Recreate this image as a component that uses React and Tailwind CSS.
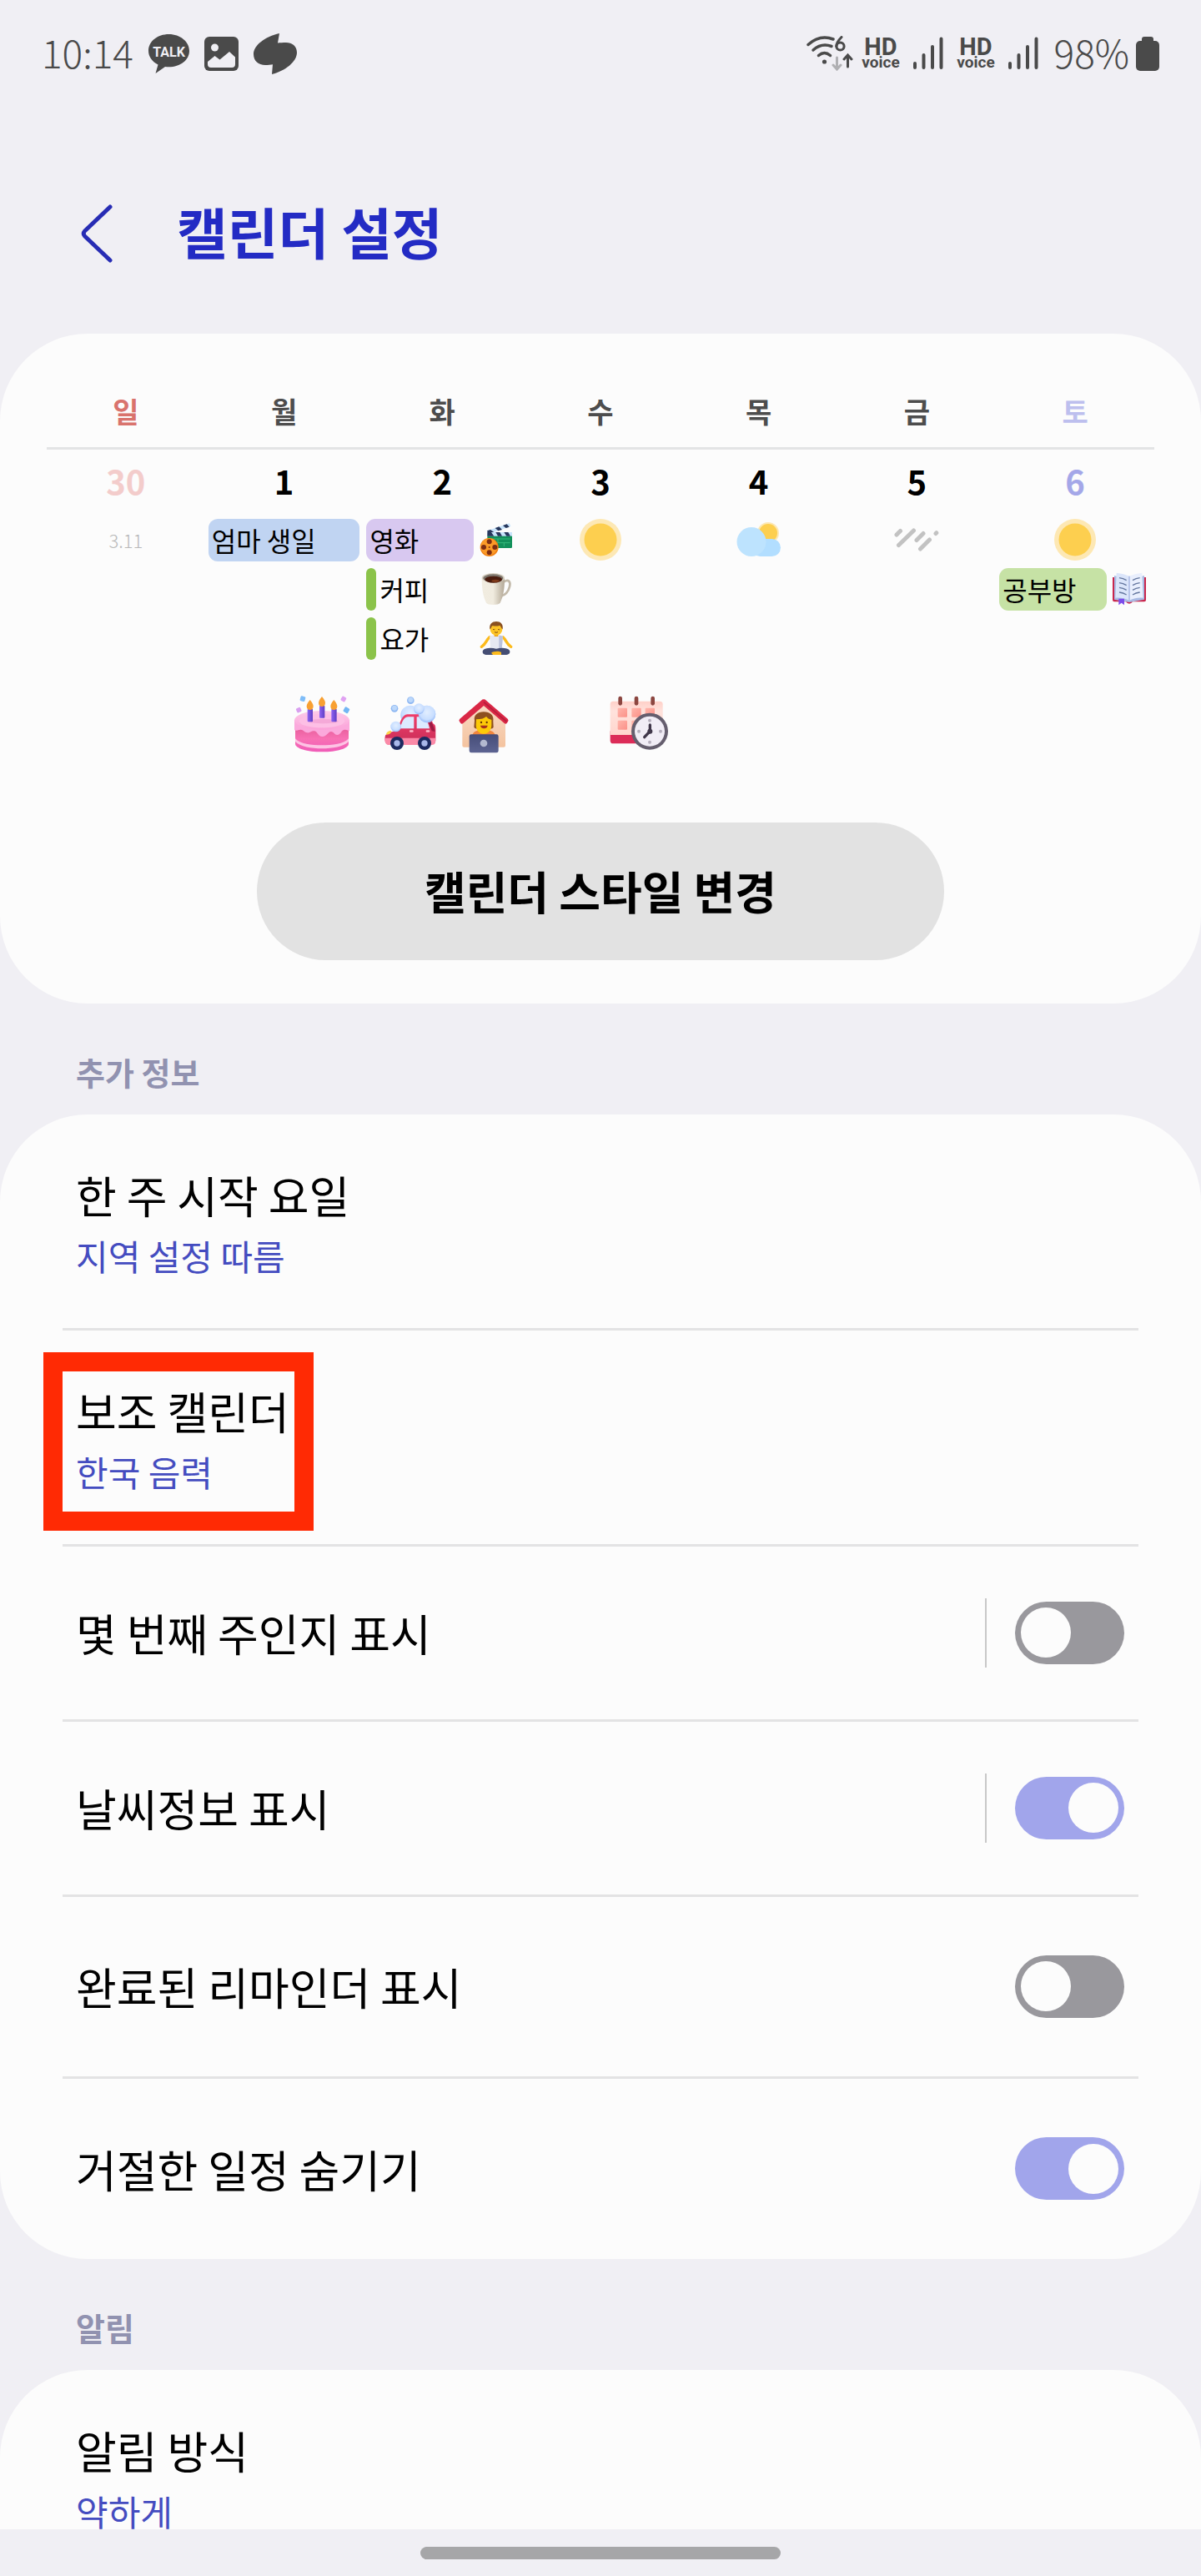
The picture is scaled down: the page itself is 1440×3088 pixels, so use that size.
import React, { useState } from "react";

const weekdays = [
  { name: "일", color: "text-[#d9736d]" },
  { name: "월", color: "text-[#4d4d4d]" },
  { name: "화", color: "text-[#4d4d4d]" },
  { name: "수", color: "text-[#4d4d4d]" },
  { name: "목", color: "text-[#4d4d4d]" },
  { name: "금", color: "text-[#4d4d4d]" },
  { name: "토", color: "text-[#bdbfee]" },
];

/* ---------- status bar icons ---------- */

const TalkIcon = () => (
  <svg className="w-[49px] h-[47px]" viewBox="0 0 49 47">
    <path
      d="M24.500 0C11 0 0 8.500 0 20c0 7 4.500 13 11.500 16.500L8.500 47l11.500-8c1.500.2 3 .3 4.500.3C38 39.300 49 31 49 20S38 0 24.500 0Z"
      fill="#4a4a4a"
    />
    <text x="24.500" y="26.500" textAnchor="middle" fontSize="16" fontWeight="700" fontFamily="Roboto, sans-serif" fill="#f0eff4">
      TALK
    </text>
  </svg>
);

const GalleryIcon = () => (
  <svg className="w-[41px] h-[41px]" viewBox="0 0 41 41">
    <rect width="41" height="41" rx="6" fill="#4a4a4a" />
    <circle cx="12.500" cy="13" r="4.500" fill="#f0eff4" />
    <path d="M4 30l8.500-7 6 4.500L30 18l7 6.500V33a4 4 0 0 1-4 4H8a4 4 0 0 1-4-4Z" fill="#f0eff4" />
  </svg>
);

const LeafIcon = () => (
  <svg className="w-[52px] h-[49px]" viewBox="0 0 52 49">
    <path
      d="M31 0C14 4 0 14 0 25c0 8 6 13 14 13 3.500 0 6.500-.4 9-.8L22 49c16-4 30-15 30-26 0-8-6-12-13-12-4 0-7 .2-10 .6Z"
      fill="#4a4a4a"
    />
  </svg>
);

const WifiIcon = () => (
  <svg className="w-[57px] h-[42px]" viewBox="0 0 57 42" fill="none" stroke="#4a4a4a" strokeLinecap="round">
    <path d="M2 10.500Q16 -2 32 4" strokeWidth="3.500" />
    <path d="M8 17Q18 8 30 12.500" strokeWidth="3.500" />
    <path d="M14.500 23.500Q21.500 17.500 28.500 23.500" strokeWidth="3.500" />
    <circle cx="21.500" cy="31" r="2.600" fill="#4a4a4a" stroke="none" />
    <path d="M42 1.500C37.500 6 35.800 9 35.800 12.500" strokeWidth="3" />
    <circle cx="40.500" cy="12.500" r="4.600" strokeWidth="3" />
    <path d="M36.500 26v13M32 35l4.500 5 4.500-5" stroke="#b0b0b3" strokeWidth="3" />
    <path d="M49.500 37V24M45 28l4.500-5 4.500 5" strokeWidth="3" />
  </svg>
);

const HdVoiceIcon = () => (
  <svg className="w-12 h-[52px]" viewBox="0 -8 48 52" fill="#4a4a4a" fontFamily="Roboto, sans-serif" fontWeight="700">
    <text x="24" y="20" fontSize="29" textAnchor="middle">
      HD
    </text>
    <text x="24" y="35" fontSize="19" textAnchor="middle">
      voice
    </text>
  </svg>
);

const SignalIcon = () => (
  <svg className="w-9 h-10" viewBox="0 0 36 40" stroke="#4a4a4a" strokeWidth="4" strokeLinecap="round">
    <path d="M2 32v5M12.500 22v15M23 12v25M33.500 2.500v34.500" />
  </svg>
);

const BatteryIcon = () => (
  <svg className="w-7 h-[41px]" viewBox="0 0 28 41" fill="#4a4a4a">
    <rect x="7" width="14" height="10" rx="3" />
    <rect y="5" width="28" height="36" rx="5" />
  </svg>
);

/* ---------- weather icons ---------- */

const SunIcon = () => (
  <svg className="size-[50px]" viewBox="0 0 50 50">
    <circle cx="25" cy="25" r="25" fill="#fde8b4" />
    <circle cx="25" cy="25" r="19.500" fill="#fdcf4f" />
  </svg>
);

const CloudIcon = () => (
  <svg className="w-[54px] h-[42px]" viewBox="0 0 54 42">
    <circle cx="38" cy="13" r="13" fill="#fde8b4" />
    <circle cx="38" cy="13" r="11" fill="#fdcf4f" />
    <rect x="18" y="20" width="35" height="21" rx="10.500" fill="#b2deff" />
    <circle cx="18" cy="23.500" r="17.500" fill="#bde3fe" />
  </svg>
);

const RainIcon = () => (
  <svg className="w-[54px] h-7" viewBox="0 0 54 28" stroke="#c2c2c2" strokeWidth="5" strokeLinecap="round">
    <path d="M3 8l4.500-4.500M5.500 20.500L23.500 3M27 14.500l8-8M31.500 25l11-11M50 6.500l.8-.8" />
  </svg>
);

/* ---------- small event stickers ---------- */

const MovieSticker = () => (
  <svg className="size-10" viewBox="0 0 120 120">
    <rect x="28" y="40" width="89" height="50" rx="4" fill="#12905a" />
    <path d="M38 57h72M38 71h72M66 57v14M88 71v13" stroke="#35b87c" strokeWidth="3" />
    <path d="M27 28l80-27 5 11-80 27Z" fill="#c9e4fb" />
    <path d="M27 28l12-4 13 9-20 7ZM56 18l14-5 11 11-14 4ZM84 9l14-5 9 10-12 4Z" fill="#27375c" />
    <rect x="28" y="33" width="89" height="14" fill="#c9e4fb" />
    <path d="M28 33h14l10 14H28ZM58 33h15l8 14H66ZM88 33h15l8 14H97Z" fill="#27375c" />
    <circle cx="35" cy="87" r="33" fill="#f07f12" />
    <circle cx="34" cy="85" r="30" fill="#fb9a27" />
    <circle cx="35" cy="67" r="9" fill="#7d2d12" />
    <circle cx="35" cy="106" r="9" fill="#7d2d12" />
    <circle cx="15" cy="87" r="9" fill="#7d2d12" />
    <circle cx="55" cy="87" r="9" fill="#7d2d12" />
    <circle cx="35" cy="87" r="3" fill="#7d2d12" />
  </svg>
);

const CoffeeSticker = () => (
  <svg className="size-10" viewBox="0 0 120 120">
    <defs>
      <linearGradient id="mug" x1="0" x2="1">
        <stop offset="0" stopColor="#f1ece0" />
        <stop offset="0.500" stopColor="#f0ebdf" />
        <stop offset="1" stopColor="#b3a896" />
      </linearGradient>
    </defs>
    <path d="M88 34c16-10 25 0 20 18-4 15-14 29-30 33" fill="none" stroke="#c2b9a9" strokeWidth="8" />
    <path d="M8 22c0 40 5 65 16 88 6 9 44 9 50 0 11-23 16-48 16-88Z" fill="url(#mug)" />
    <ellipse cx="49" cy="20" rx="41" ry="17" fill="#d9d2c4" />
    <ellipse cx="49" cy="21" rx="36" ry="14" fill="#7d766d" />
    <ellipse cx="50" cy="26" rx="31" ry="12" fill="#4a1c0e" />
    <ellipse cx="57" cy="31" rx="14" ry="5" fill="#7e3919" />
  </svg>
);

const YogaSticker = () => (
  <svg className="size-10" viewBox="0 0 120 120">
    <path d="M36 56C24 66 24 80 7 91M84 56c12 10 12 24 29 35" fill="none" stroke="#fdbb1c" strokeWidth="10" strokeLinecap="round" />
    <path d="M36 53c12-6 36-6 48 0l-4 46H40Z" fill="#e6e9f2" />
    <path d="M70 50c6 0 10 1 14 4l-4 45H70Z" fill="#bcc3dc" />
    <path d="M12 104c8-10 30-10 48-6 18-4 40-4 48 6 4 10-4 16-16 16H28c-12 0-20-6-16-16Z" fill="#454e74" />
    <path d="M42 113c8-7 28-8 36-2v9H48Z" fill="#fdbb1c" />
    <rect x="53" y="38" width="14" height="16" fill="#f0a30c" />
    <circle cx="60" cy="28" r="22" fill="#fdc426" />
    <path d="M37 28C34 8 46 0 60 0c16 0 26 10 23 28-5-2-6-10-10-14-10 4-24 2-28 2-3 4-3 10-8 12Z" fill="#8a5020" />
    <path d="M48 28q4 3 7 0M66 28q4 3 7 0M54 38q6 4 12 0" fill="none" stroke="#6b3a10" strokeWidth="2.500" />
  </svg>
);

const BookSticker = () => (
  <svg className="size-10" viewBox="0 0 120 120">
    <path d="M0 18h120v82q0 6-6 6H72q-4 7-12 7t-12-7H6q-6 0-6-6Z" fill="#c9264d" />
    <path d="M6 12l54 14 54-14v86l-54 10-54-10Z" fill="#a9bbe4" />
    <path d="M14 2c18 2 34 6 46 12v88C46 94 30 90 10 92Z" fill="#dbe5fa" />
    <path d="M106 2C88 4 72 8 60 14v88c14-8 30-12 50-10Z" fill="#e9effd" />
    <path d="M60 14v88" stroke="#b0bfe6" strokeWidth="5" />
    <path
      d="M24 20q14 2 26 9M24 38q14 2 26 9M24 55q14 2 26 9M24 72q14 2 26 9M98 20q-14 2-26 9M98 38q-14 2-26 9M98 55q-14 2-26 9M98 72q-14 2-26 9"
      fill="none"
      stroke="#64779f"
      strokeWidth="4"
    />
    <path d="M22 95h20v23l-10-8-10 8Z" fill="#7c4bea" />
  </svg>
);

/* ---------- large stickers ---------- */

const CakeSticker = () => (
  <svg className="size-[70px]" viewBox="0 0 210 210">
    <defs>
      <linearGradient id="cakeBody" x1="0" y1="0" x2="0" y2="1">
        <stop offset="0" stopColor="#e0568f" />
        <stop offset="0.550" stopColor="#f871b4" />
        <stop offset="1" stopColor="#f05bb8" />
      </linearGradient>
      <linearGradient id="cakeTop" x1="0" y1="0" x2="0" y2="1">
        <stop offset="0" stopColor="#fdcbe9" />
        <stop offset="1" stopColor="#fba3d9" />
      </linearGradient>
      <linearGradient id="candle" x1="0" x2="1">
        <stop offset="0" stopColor="#8f63f2" />
        <stop offset="1" stopColor="#5f3fc4" />
      </linearGradient>
    </defs>
    <path d="M9 100h192v76c0 16-42 29-96 29S9 192 9 176Z" fill="url(#cakeBody)" />
    <path d="M9 157c16 20 60 24 96 24s80-4 96-24v11c-16 18-60 25-96 25s-80-7-96-25Z" fill="#fdc3e4" />
    <path
      d="M6 92h198v38c-8-2-12-6-20-4-10 3-12 18-24 18-10 0-12-12-22-12-12 0-14 18-32 18-16 0-16-18-28-20-10-2-16 8-26 6-12-2-14-12-24-11-10 1-12 5-22 2Z"
      fill="#fba9dc"
    />
    <ellipse cx="105" cy="91" rx="99" ry="34" fill="url(#cakeTop)" />
    <ellipse cx="105" cy="94" rx="82" ry="24" fill="#fdbfe5" />
    <ellipse cx="110" cy="95" rx="54" ry="8" fill="#ee93cc" opacity="0.500" />
    <rect x="53" y="50" width="19" height="47" rx="3" fill="url(#candle)" />
    <rect x="96" y="38" width="19" height="45" rx="3" fill="url(#candle)" />
    <rect x="139" y="50" width="19" height="47" rx="3" fill="url(#candle)" />
    <path d="M62 18c8 10 12 17 12 23 0 8-5 13-12 13s-12-5-12-13c0-6 4-13 12-23Z" fill="#f8a032" />
    <path d="M105 6c8 10 12 17 12 23 0 8-5 13-12 13s-12-5-12-13c0-6 4-13 12-23Z" fill="#f8a032" />
    <path d="M148 18c8 10 12 17 12 23 0 8-5 13-12 13s-12-5-12-13c0-6 4-13 12-23Z" fill="#f8a032" />
    <rect x="27" y="5" width="18" height="18" rx="4" fill="#7fbdf8" transform="rotate(15 36 14)" />
    <rect x="13" y="46" width="17" height="17" rx="4" fill="#d9a0f0" transform="rotate(-25 21 54)" />
    <rect x="174" y="6" width="17" height="17" rx="4" fill="#e0a2f2" transform="rotate(30 182 15)" />
    <rect x="184" y="45" width="19" height="19" rx="4" fill="#72b6f4" transform="rotate(30 193 54)" />
  </svg>
);

const CarWashSticker = () => (
  <svg className="size-[70px]" viewBox="0 0 210 210">
    <defs>
      <radialGradient id="bubble" cx="0.500" cy="0.400" r="0.600">
        <stop offset="0" stopColor="#e2eeff" />
        <stop offset="0.700" stopColor="#c8deff" />
        <stop offset="1" stopColor="#94b8f8" />
      </radialGradient>
      <linearGradient id="carBody" x1="0" y1="0" x2="0" y2="1">
        <stop offset="0" stopColor="#f03d6a" />
        <stop offset="1" stopColor="#c92e58" />
      </linearGradient>
    </defs>
    <circle cx="105" cy="73" r="35" fill="url(#bubble)" />
    <circle cx="165" cy="69" r="31" fill="url(#bubble)" />
    <path
      d="M14 150c2-16 30-18 44-22 10-32 18-56 36-58h68c10 0 18 14 24 32 8 4 10 10 10 20v40c0 10-4 16-14 16H26c-10 0-14-14-12-28Z"
      fill="url(#carBody)"
    />
    <path d="M168 92l14 6c4 10 10 22 12 34l-12-2Z" fill="#9d1c44" />
    <path d="M68 121c6-24 14-42 30-42h20v42Z" fill="#dceaff" />
    <path d="M128 79h28c6 0 14 26 18 42h-46Z" fill="#dceaff" />
    <circle cx="165" cy="69" r="31" fill="url(#bubble)" />
    <path d="M13 155h182v15c0 6-6 10-14 10H28c-12 0-16-12-15-25Z" fill="#fb8aa8" />
    <path d="M18 143c0-8 8-14 18-14 2 8-6 15-18 14Z" fill="#fcd34a" />
    <rect x="102" y="127" width="14" height="7" rx="3" fill="#fdb9c9" />
    <rect x="161" y="127" width="14" height="7" rx="3" fill="#fdb9c9" />
    <circle cx="57" cy="174" r="24" fill="#1d2a60" />
    <circle cx="57" cy="174" r="11" fill="#a9b8ea" />
    <circle cx="156" cy="174" r="24" fill="#1d2a60" />
    <circle cx="156" cy="174" r="11" fill="#a9b8ea" />
    <circle cx="53" cy="114" r="19" fill="url(#bubble)" />
    <circle cx="136" cy="50" r="19" fill="url(#bubble)" />
    <circle cx="48" cy="49" r="13" fill="#8fb8f2" />
    <circle cx="48" cy="47" r="9" fill="#bcd8fb" />
    <circle cx="106" cy="20" r="13" fill="#8fb8f2" />
    <circle cx="106" cy="18" r="9" fill="#bcd8fb" />
  </svg>
);

const HomeSticker = () => (
  <svg className="size-[70px]" viewBox="0 0 210 210">
    <defs>
      <linearGradient id="wall" x1="0" y1="0" x2="0" y2="1">
        <stop offset="0" stopColor="#f9dcc6" />
        <stop offset="1" stopColor="#f4c39f" />
      </linearGradient>
      <linearGradient id="laptop" x1="0" y1="0" x2="0" y2="1">
        <stop offset="0" stopColor="#464d78" />
        <stop offset="1" stopColor="#5d6492" />
      </linearGradient>
    </defs>
    <path d="M28 92l77-66 78 66v90q0 6-6 6H34q-6 0-6-6Z" fill="url(#wall)" />
    <path d="M105 16q5 0 9 4l77 66q5 5 1 10l-4 6q-4 4-9 0l-74-63-74 63q-5 4-9 0l-4-6q-4-5 1-10l77-66q4-4 9-4Z" fill="#da2846" />
    <path d="M105 26l82 70" stroke="#b81d3c" strokeWidth="5" />
    <path d="M64 144c4-14 20-18 41-18s37 4 41 18Z" fill="#f0853d" />
    <path d="M72 92c-4-18 10-31 33-31 22 0 38 12 34 34l1 22q-6 6-12 4H82q-8 2-12-5Z" fill="#8d5020" />
    <path d="M78 88c18 0 30-4 36-10 8 10 16 10 19 12v18c0 20-12 32-28 32s-28-12-28-32Z" fill="#fdca08" />
    <circle cx="96" cy="99" r="3.500" fill="#653006" />
    <circle cx="116" cy="99" r="3.500" fill="#653006" />
    <path d="M93 110h26c-1 14-25 14-26 0Z" fill="#a8331c" />
    <rect x="53" y="142" width="105" height="66" rx="7" fill="url(#laptop)" />
    <circle cx="105" cy="174" r="13" fill="#b3b9d0" />
  </svg>
);

const ScheduleSticker = () => (
  <svg className="size-[70px]" viewBox="0 0 210 210">
    <defs>
      <linearGradient id="sheet" x1="0" y1="0" x2="0" y2="1">
        <stop offset="0" stopColor="#ffd0c8" />
        <stop offset="0.300" stopColor="#ffe2dc" />
        <stop offset="1" stopColor="#ffd6cd" />
      </linearGradient>
      <linearGradient id="slot" x1="0" y1="0" x2="1" y2="1">
        <stop offset="0" stopColor="#ffb5ab" />
        <stop offset="1" stopColor="#fb9188" />
      </linearGradient>
    </defs>
    <path d="M2 130h188v34q0 11-11 11H13q-11 0-11-11Z" fill="#dc2c58" />
    <path d="M2 34q0-11 11-11h167q11 0 11 11v110H2Z" fill="url(#sheet)" />
    <rect x="29" y="47" width="34" height="33" rx="3" fill="url(#slot)" />
    <rect x="79" y="47" width="34" height="33" rx="3" fill="url(#slot)" />
    <rect x="128" y="47" width="34" height="33" rx="3" fill="url(#slot)" />
    <rect x="29" y="92" width="34" height="33" rx="3" fill="url(#slot)" />
    <rect x="79" y="92" width="34" height="33" rx="3" fill="url(#slot)" />
    <rect x="31" y="5" width="14" height="33" rx="7" fill="#8c4640" />
    <rect x="89" y="5" width="14" height="33" rx="7" fill="#8c4640" />
    <rect x="148" y="5" width="14" height="33" rx="7" fill="#8c4640" />
    <circle cx="144" cy="131" r="66" fill="#655e6e" />
    <circle cx="144" cy="131" r="54" fill="#f1edf6" />
    <circle cx="144" cy="92" r="6" fill="#b5afbd" />
    <circle cx="144" cy="170" r="6" fill="#b5afbd" />
    <circle cx="105" cy="131" r="6" fill="#b5afbd" />
    <circle cx="183" cy="131" r="6" fill="#b5afbd" />
    <path d="M145 108v23l-20 21" fill="none" stroke="#40374a" strokeWidth="10" strokeLinecap="round" />
    <circle cx="145" cy="131" r="9" fill="#40374a" />
  </svg>
);

/* ---------- calendar preview ---------- */

// filled event with an optional sticker on the right
const EventChip = ({ title, color, sticker }) => (
  <div className="flex h-[51px] items-center gap-[7px]">
    <p className={`flex h-full flex-1 items-center rounded-[11px] pl-1 text-[32px] leading-none whitespace-nowrap ${color}`}>
      {title}
    </p>
    {sticker && <div className="mr-1.5 shrink-0">{sticker}</div>}
  </div>
);

// timed event, only a green bar on the left
const TimedEvent = ({ title, sticker }) => (
  <div className="flex h-[51px] items-center">
    <div className="h-full w-3 rounded-md bg-[#8bc34a]" />
    <p className="flex-1 pl-1 text-[32px] leading-none">{title}</p>
    <div className="mr-1.5 shrink-0">{sticker}</div>
  </div>
);

const DayCell = ({ date, color = "text-black", children }) => (
  <td className="px-1 align-top">
    <p className={`h-[83px] text-center text-[40px] leading-[74px] font-bold ${color}`}>{date}</p>
    <div className="flex flex-col gap-2">{children}</div>
  </td>
);

const Weather = ({ children }) => <div className="flex h-[51px] items-center justify-center">{children}</div>;

const CalendarPreview = () => (
  <table className="w-full table-fixed border-collapse">
    <thead>
      <tr className="border-b-[3px] border-[#e3e4e5]">
        {weekdays.map((day) => (
          <th key={day.name} className={`h-[81px] pb-1.5 text-[34px] leading-none font-bold ${day.color}`}>
            {day.name}
          </th>
        ))}
      </tr>
    </thead>
    <tbody>
      <tr>
        <DayCell date="30" color="text-[#f3cccb]">
          <p className="text-center text-[22px] leading-[51px] font-light text-[#b8b8b8]">3.11</p>
        </DayCell>
        <DayCell date="1">
          <EventChip title="엄마 생일" color="bg-[#c0d4f2]" />
        </DayCell>
        <DayCell date="2">
          <EventChip title="영화" color="bg-[#d8c8f0]" sticker={<MovieSticker />} />
          <TimedEvent title="커피" sticker={<CoffeeSticker />} />
          <TimedEvent title="요가" sticker={<YogaSticker />} />
        </DayCell>
        <DayCell date="3">
          <Weather>
            <SunIcon />
          </Weather>
        </DayCell>
        <DayCell date="4">
          <Weather>
            <CloudIcon />
          </Weather>
        </DayCell>
        <DayCell date="5">
          <Weather>
            <RainIcon />
          </Weather>
        </DayCell>
        <DayCell date="6" color="text-[#a4a7e8]">
          <Weather>
            <SunIcon />
          </Weather>
          <EventChip title="공부방" color="bg-[#c6e2a5]" sticker={<BookSticker />} />
        </DayCell>
      </tr>
      <tr>
        <td />
        <td className="pt-[42px] pr-3.5">
          <div className="flex justify-end">
            <CakeSticker />
          </div>
        </td>
        <td className="pt-[42px] pr-2.5">
          <div className="flex justify-end gap-[18px]">
            <CarWashSticker />
            <HomeSticker />
          </div>
        </td>
        <td className="pt-[42px] pr-3.5">
          <div className="flex justify-end">
            <ScheduleSticker />
          </div>
        </td>
        <td />
        <td />
        <td />
      </tr>
    </tbody>
  </table>
);

/* ---------- settings list ---------- */

const SectionTitle = ({ children }) => (
  <h2 className="flex h-[133px] items-center px-[91px] pt-8 text-[38px] leading-none font-bold text-[#9192b0]">
    {children}
  </h2>
);

const LinkRow = ({ title, value, highlighted }) => (
  <div className="flex pt-[58px] pb-[52px] pl-4">
    <button className="relative text-left">
      <span className="block text-[53px] leading-[76px] text-black">{title}</span>
      <span className="block text-[42px] leading-[70px] text-[#444cc0]">{value}</span>
      {highlighted && (
        <span className="absolute -top-8 -right-[29px] -bottom-9 -left-[39px] border-[23px] border-[#ff2a04]" />
      )}
    </button>
  </div>
);

const SwitchRow = ({ id, title, defaultOn = false, divided, height = "h-[210px]" }) => {
  const [on, setOn] = useState(defaultOn);

  return (
    <div className={`flex items-center justify-between pr-[17px] pl-4 ${height}`}>
      <label htmlFor={id} className="text-[53px] leading-[76px] text-black">
        {title}
      </label>
      <div className="flex items-center gap-[34px]">
        {divided && <div className="h-[83px] w-0.5 bg-[#c8c8c8]" />}
        <input
          id={id}
          type="checkbox"
          role="switch"
          checked={on}
          onChange={() => setOn(!on)}
          className="flex h-[75px] w-[131px] cursor-pointer appearance-none items-center rounded-full bg-[#99989d] px-[7px] before:size-[60px] before:rounded-full before:bg-[#fcfcfc] checked:bg-[#a1a5eb] checked:before:ml-[57px]"
        />
      </div>
    </div>
  );
};

const App = () => {
  return (
    <div className="flex h-screen flex-col overflow-hidden bg-[#f0eff4] font-['Noto_Sans_CJK_KR',sans-serif]">
      {/* status bar */}
      <div className="flex h-32 shrink-0 items-center justify-between px-[50px] text-[46px] leading-none font-light text-[#4a4a4a]">
        <div className="flex items-center gap-[18px]">
          <span className="pb-1">10:14</span>
          <TalkIcon />
          <GalleryIcon />
          <LeafIcon />
        </div>
        <div className="flex items-center gap-[15px]">
          <div className="flex items-center gap-2">
            <WifiIcon />
            <HdVoiceIcon />
          </div>
          <SignalIcon />
          <HdVoiceIcon />
          <SignalIcon />
          <div className="flex items-center gap-2 pl-1">
            <span className="pb-1">98%</span>
            <BatteryIcon />
          </div>
        </div>
      </div>

      {/* page title */}
      <header className="flex h-[272px] shrink-0 items-center gap-[76px] pt-8 pl-24">
        <button aria-label="뒤로">
          <svg className="h-[70px] w-10" viewBox="0 0 40 70" fill="none" stroke="#272cb4" strokeWidth="5" strokeLinecap="round" strokeLinejoin="round">
            <path d="M36 3L5.500 32q-2.500 3 0 6L36 67" />
          </svg>
        </button>
        <h1 className="pb-2 text-[66px] leading-none font-bold text-[#232bc4]">캘린더 설정</h1>
      </header>

      <main className="min-h-0 flex-1 overflow-y-auto [scrollbar-width:none]">
        <section className="rounded-[105px] bg-[#fcfcfc] px-14 pt-14 pb-[52px]">
          <CalendarPreview />
          <div className="mt-[83px] flex justify-center">
            <button className="h-[165px] w-[62%] rounded-full bg-[#e2e2e2] text-[54px] leading-none font-bold text-black">
              캘린더 스타일 변경
            </button>
          </div>
        </section>

        <SectionTitle>추가 정보</SectionTitle>
        <section className="divide-y-[3px] divide-[#e3e3e4] rounded-[105px] bg-[#fcfcfc] px-[75px]">
          <LinkRow title="한 주 시작 요일" value="지역 설정 따름" />
          <LinkRow title="보조 캘린더" value="한국 음력" highlighted />
          <SwitchRow id="week-number" title="몇 번째 주인지 표시" divided />
          <SwitchRow id="weather" title="날씨정보 표시" defaultOn divided />
          <SwitchRow id="reminder" title="완료된 리마인더 표시" height="h-[218px]" />
          <SwitchRow id="declined" title="거절한 일정 숨기기" defaultOn height="h-[216px]" />
        </section>

        <SectionTitle>알림</SectionTitle>
        <section className="rounded-t-[105px] bg-[#fcfcfc] px-[75px]">
          <LinkRow title="알림 방식" value="약하게" />
        </section>
      </main>

      {/* gesture bar */}
      <div className="flex h-14 shrink-0 items-center justify-center">
        <div className="h-[15px] w-[30%] rounded-full bg-[#a6a6a8]" />
      </div>
    </div>
  );
};

export default App;
